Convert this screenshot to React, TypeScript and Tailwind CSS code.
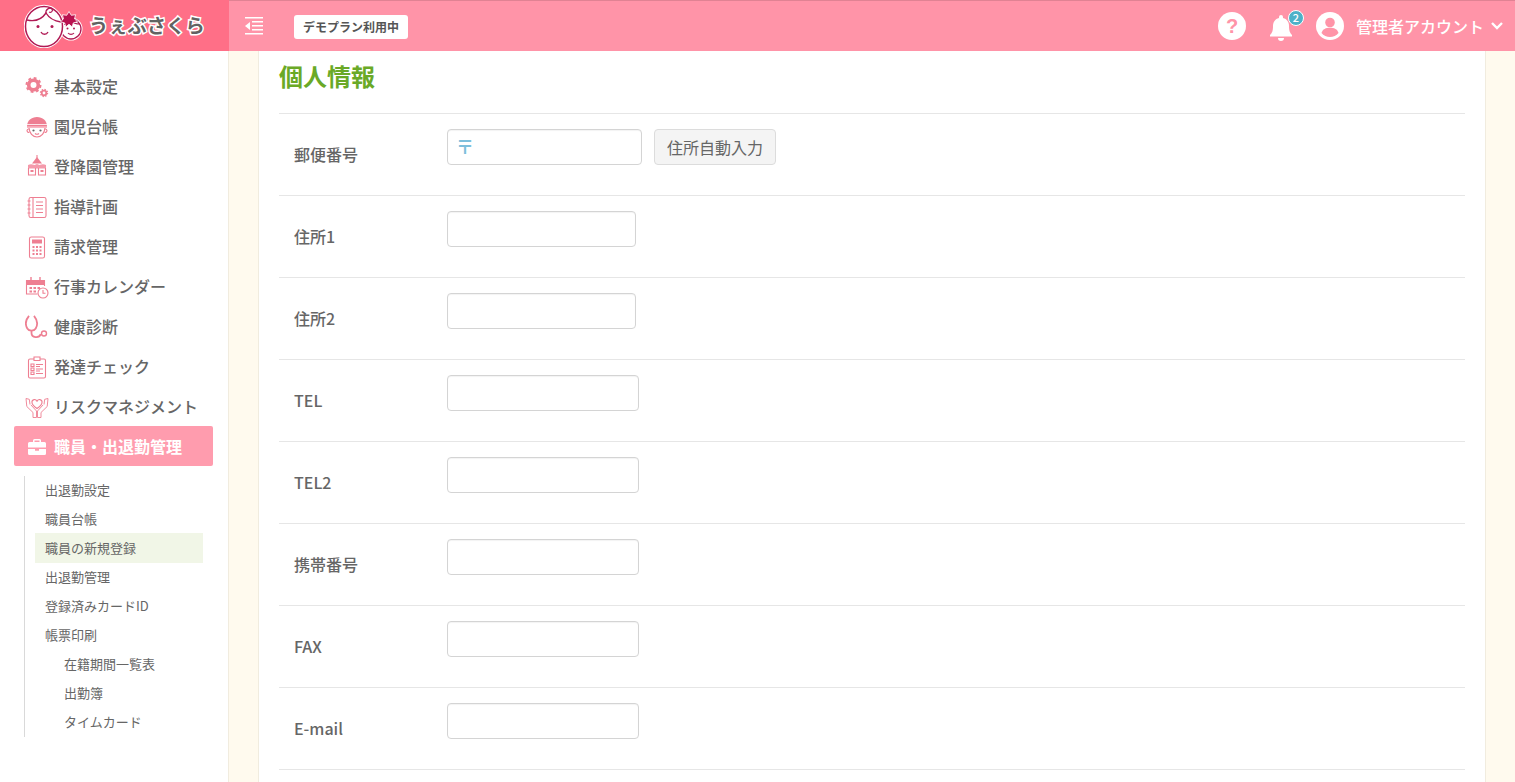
import type { ReactNode } from "react";

const font = "font-['Noto_Sans_CJK_JP','Noto_Sans',sans-serif]";
const pink = "#ee7f92";

// sidebar icons are hand drawn, 24x24 box
const Svg = ({ children }: { children: ReactNode }) => (
  <svg width="24" height="24" viewBox="0 0 24 24" fill="none" stroke={pink} strokeWidth="1.1">
    {children}
  </svg>
);

const GearIcon = () => (
  <Svg>
    <circle cx="8.500" cy="10" r="4.800" strokeWidth="3.600" />
    <circle cx="8.500" cy="10" r="7" strokeWidth="2" strokeDasharray="2.800 2.700" />
    <circle cx="19" cy="18" r="2.300" strokeWidth="1.800" />
    <circle cx="19" cy="18" r="3.600" strokeWidth="1.200" strokeDasharray="1.400 1.430" />
  </Svg>
);

const ChildIcon = () => (
  <Svg>
    <path d="M2 11.500C2 5.500 6.500 2 12 2s10 3.500 10 9.500Z" fill={pink} stroke="none" />
    <path d="M2 9.500h20" stroke="#fff" strokeWidth=".8" />
    <path d="M2 11h20v1.800H2Z" fill="#f7a7b5" stroke="none" />
    <path d="M4 13c.5 5 3.500 9 8 9s7.500-4 8-9" strokeWidth="1.200" />
    <path d="M3.800 14a2 2 0 0 0-1.800 1.500 2 2 0 0 0 2.300 2M20.200 14a2 2 0 0 1 1.800 1.500 2 2 0 0 1-2.300 2" />
    <circle cx="8.500" cy="15.500" r="1.100" fill="#666" stroke="none" />
    <circle cx="15.500" cy="15.500" r="1.100" fill="#666" stroke="none" />
    <path d="M10 18.500c1 .8 3 .8 4 0" />
  </Svg>
);

const SchoolIcon = () => (
  <Svg>
    <path d="M12 0v3" />
    <path d="M12 2l5 6.500H7Z" fill={pink} stroke="none" />
    <path d="M3 10c2-1 4-1 6.500 0l2.500-1 2.500 1c2.500-1 4.500-1 6.500 0v3.500H3Z" fill="#f49aab" stroke="none" />
    <path d="M3.500 13v7h7v-7M13.500 13v7h7v-7" />
    <path d="M5.500 15h3v2h-3zM15.500 15h3v2h-3z" fill={pink} stroke="none" />
  </Svg>
);

const NoteIcon = () => (
  <Svg>
    <rect x="4" y="2.500" width="17" height="20" rx="1.800" />
    <path d="M8 2.500v20M11 7h7M11 10.500h7M11 14h7M11 17.500h7" />
    <path d="M2.500 6h3M2.500 10h3M2.500 14h3M2.500 18h3" />
  </Svg>
);

const CalcIcon = () => (
  <Svg>
    <rect x="4.500" y="2" width="15" height="21" rx="1.800" />
    <rect x="7" y="4.500" width="10" height="4" fill={pink} stroke="none" />
    <path
      d="M7.500 11h2v2h-2zM11 11h2v2h-2zM14.500 11h2v2h-2zM7.500 14.500h2v2h-2zM11 14.500h2v2h-2zM14.500 14.500h2v2h-2zM7.500 18h2v2h-2zM11 18h2v2h-2zM14.500 18h2v2h-2z"
      fill={pink}
      stroke="none"
    />
  </Svg>
);

const CalendarIcon = () => (
  <Svg>
    <path d="M1.500 5h18v5h-18z" fill={pink} stroke="none" />
    <path d="M1.500 5v14h11M19.500 5v6" />
    <path d="M6 2v4M15 2v4" strokeWidth="1.400" />
    <path d="M4.500 12h2.500v2h-2.500zM8.500 12H11v2H8.500zM12.500 12H15v2h-2.500zM4.500 15.500h2.500v2h-2.500zM8.500 15.500H11v2H8.500z" fill={pink} stroke="none" />
    <circle cx="18" cy="18" r="5" />
    <path d="M18 15v3.200h2.500" />
  </Svg>
);

const StethIcon = () => (
  <Svg>
    <path d="M4 .8C.5 5 .3 10 2.300 13.500c1.700 2.800 6.700 2.800 8.400 0C12.700 10 12.500 5 9 .8" strokeWidth="1.800" />
    <path d="M6.500 15.500v2.500c0 4.800 7.500 5.800 9.300 1.200" strokeWidth="1.800" />
    <circle cx="19" cy="18.500" r="2.500" strokeWidth="1.400" />
  </Svg>
);

const CheckIcon = () => (
  <Svg>
    <rect x="3.500" y="4" width="17" height="19" rx="1.500" />
    <path d="M9 2h6v3.500H9z" fill="#fff" />
    <path d="M6 9h3v2.500H6zM6 13h3v2.500H6zM6 17h3v2.500H6z" />
    <path d="M11 9.500h7M11 11.500h4M11 14h7M11 16h4M11 18.500h7" />
  </Svg>
);

const HandsIcon = () => (
  <Svg>
    <path d="M12 13.500C8.500 11 7 9.500 7 7.500a2.500 2.500 0 0 1 5-.8 2.500 2.500 0 0 1 5 .8c0 2-1.500 3.500-5 6Z" />
    <path d="M1 3.500l.8 8 6.200 6v5h3.500v-6.500l-5.500-6M23 3.500l-.8 8-6.200 6v5h-3.500v-6.500l5.500-6" strokeWidth=".9" />
    <path d="M1 3.500l3.300.8L5 9.500M23 3.500l-3.300.8L19 9.500" strokeWidth=".9" />
  </Svg>
);

const CaseIcon = () => (
  <svg width="24" height="24" viewBox="0 0 24 24" fill="#fff">
    <path d="M9.500 4h5A1.500 1.500 0 0 1 16 5.500V7h3.500A1.500 1.500 0 0 1 21 8.500v4H3v-4A1.500 1.500 0 0 1 4.500 7H8V5.500A1.500 1.500 0 0 1 9.500 4Zm0 1.500V7h5V5.500Z" fillRule="evenodd" />
    <path d="M3 14h7v1.800h4V14h7v4.500a1.500 1.500 0 0 1-1.500 1.500h-15A1.500 1.500 0 0 1 3 18.500Z" />
  </svg>
);

// logo: mother and child faces with a cherry blossom
const Logo = () => (
  <svg width="60" height="44" viewBox="0 0 60 44">
    <circle cx="47" cy="25" r="10" fill="#fff" stroke="#fff" strokeWidth="3" />
    <circle cx="47" cy="25" r="10" fill="#fff" stroke="#b01a55" strokeWidth="1.300" />
    <path d="M38 20c4 1 7 0 9-3 2 2 5 3 9 3" fill="none" stroke="#b01a55" strokeWidth="1.100" />
    <circle cx="43.500" cy="24.500" r="1" fill="#b01a55" />
    <circle cx="50" cy="24.500" r="1" fill="#b01a55" />
    <path d="M44 29c1.500 1.800 4.500 1.800 6 0" fill="none" stroke="#b01a55" strokeWidth="1.100" />
    <ellipse cx="20" cy="22.500" rx="18.500" ry="20" fill="#fff" stroke="#fff" strokeWidth="3.500" />
    <ellipse cx="20" cy="22.500" rx="18.500" ry="20" fill="#fff" stroke="#b01a55" strokeWidth="1.500" />
    <path d="M3 16c9 2 15-1 19-7 3 5 8 8 15 9" fill="none" stroke="#b01a55" strokeWidth="1.400" />
    <path d="M22 10c-1-5 4-7 6-5 1.500 2-1 4-3 3" fill="none" stroke="#b01a55" strokeWidth="1.200" />
    <circle cx="14" cy="22.500" r="1.500" fill="#b01a55" />
    <circle cx="28" cy="22.500" r="1.500" fill="#b01a55" />
    <path d="M17 28c1.500 3 5.500 3 7 0" fill="none" stroke="#b01a55" strokeWidth="1.400" />
    <path
      d="M45 7.500l2.300 3.800 4.300-.6-1.100 4.200 3 2.900-4.200 1.100-1.100 4.100-3.200-2.800-3.200 2.800-1.100-4.100-4.200-1.100 3-2.900-1.100-4.200 4.300.6Z"
      fill="#b8114f"
      stroke="#fff"
      strokeWidth=".8"
    />
  </svg>
);

const menu = [
  { label: "基本設定", icon: <GearIcon /> },
  { label: "園児台帳", icon: <ChildIcon /> },
  { label: "登降園管理", icon: <SchoolIcon /> },
  { label: "指導計画", icon: <NoteIcon /> },
  { label: "請求管理", icon: <CalcIcon /> },
  { label: "行事カレンダー", icon: <CalendarIcon /> },
  { label: "健康診断", icon: <StethIcon /> },
  { label: "発達チェック", icon: <CheckIcon /> },
  { label: "リスクマネジメント", icon: <HandsIcon /> },
];

const subMenu = [
  { label: "出退勤設定" },
  { label: "職員台帳" },
  { label: "職員の新規登録", active: true },
  { label: "出退勤管理" },
  { label: "登録済みカードID" },
  { label: "帳票印刷" },
  { label: "在籍期間一覧表", child: true },
  { label: "出勤簿", child: true },
  { label: "タイムカード", child: true },
];

const rows = [
  { label: "住所1", width: "w-[189px]" },
  { label: "住所2", width: "w-[189px]" },
  { label: "TEL", width: "w-[192px]" },
  { label: "TEL2", width: "w-[192px]" },
  { label: "携帯番号", width: "w-[192px]" },
  { label: "FAX", width: "w-[192px]" },
  { label: "E-mail", width: "w-[192px]" },
];

const inputClass = "block h-9 rounded-[4px] border border-[#d4d4d4] bg-white shadow-[inset_0_1px_1px_rgba(0,0,0,0.05)]";

export default function App() {
  return (
    <div className={`${font} flex h-screen flex-col overflow-hidden bg-[#fffaee]`}>
      {/* header */}
      <header className="flex h-[51px] shrink-0 items-center bg-[#ff94a8] shadow-[inset_0_1px_0_rgba(0,0,0,0.12)]">
        <div className="flex h-full w-[229px] shrink-0 items-center gap-[6px] bg-[#ff6f87] pl-[24px]">
          <Logo />
          <span className="-ml-[1px] text-[19.300px] font-bold leading-none tracking-[0px] text-[#626262] [-webkit-text-stroke:3px_#fff] [paint-order:stroke]">
            うぇぶさくら
          </span>
        </div>
        <svg className="ml-[16px]" width="18" height="18" viewBox="0 0 18 18" fill="#fff">
          <path d="M0 0h18v1.500H0zM7 4h11v1.500H7zM7 8h11v1.500H7zM7 12h11v1.500H7zM0 16h18v1.500H0zM5 5v8L0 9Z" />
        </svg>
        <span className="ml-[31px] mt-[3px] flex h-[24px] w-[114px] items-center justify-center rounded-[3px] bg-white text-[12px] font-bold leading-none text-[#555]">
          デモプラン利用中
        </span>
        <div className="ml-auto flex items-center pr-[11px] text-white">
          <svg width="28" height="28" viewBox="0 0 28 28">
            <circle cx="14" cy="14" r="14" fill="#fff" />
            <text x="14" y="21" textAnchor="middle" fontSize="20" fontWeight="700" fill="#ff94a8" fontFamily="Liberation Sans, sans-serif">
              ?
            </text>
          </svg>
          <div className="relative ml-[23px] h-[28px] w-[26px]">
            <svg className="absolute left-0 top-[3px]" width="24" height="26" viewBox="0 0 24 26" fill="#fff">
              <path d="M12 0a2 2 0 0 1 2 2v1c4 1 6 4 6 8 0 5 1 7 3 9v1.500H1V20c2-2 3-4 3-9 0-4 2-7 6-8V2a2 2 0 0 1 2-2ZM9 23h6a3 3 0 0 1-6 0Z" />
            </svg>
            <span className="absolute left-[19px] top-[-2px] flex h-[16px] w-[16px] items-center justify-center rounded-full border border-white bg-[#4db1c8] text-[11px] font-medium leading-none text-white">
              2
            </span>
          </div>
          <svg className="ml-[21px]" width="28" height="28" viewBox="0 0 28 28">
            <circle cx="14" cy="14" r="14" fill="#fff" />
            <circle cx="14" cy="10.500" r="4.800" fill="#ff94a8" />
            <path d="M5.500 21c1-4 4.500-5.300 8.500-5.300s7.500 1.300 8.500 5.300a11 11 0 0 1-17 0Z" fill="#ff94a8" />
          </svg>
          <span className="ml-[12px] text-[16px] font-medium leading-none">管理者アカウント</span>
          <svg className="ml-[6px]" width="14" height="10" viewBox="0 0 14 10" fill="none" stroke="#fff" strokeWidth="2.400">
            <path d="M2 2l5 5 5-5" />
          </svg>
        </div>
      </header>

      <div className="flex min-h-0 flex-1">
        {/* sidebar */}
        <aside className="w-[229px] shrink-0 border-r border-[#f1ecdf] bg-white pl-[14px] pr-[15px] pt-[16px]">
          <ul>
            {menu.map((m) => (
              <li key={m.label} className="flex h-[40px] items-center gap-[5px] pl-[11px] text-[16px] font-medium text-[#666]">
                <span className="h-[24px] w-[24px] shrink-0">{m.icon}</span>
                <span className="-mt-[2px]">{m.label}</span>
              </li>
            ))}
            <li className="-mt-[1px] flex h-[40px] items-center gap-[5px] rounded-[2px] bg-[#ff9cae] pl-[11px] pt-[2px] text-[16px] font-bold text-white">
              <span className="h-[24px] w-[24px] shrink-0">
                <CaseIcon />
              </span>
              <span className="-mt-[2px]">職員・出退勤管理</span>
            </li>
          </ul>
          <ul className="ml-[10px] mt-[10px] h-[261px] border-l border-[#d9d9d9] pl-[10px] pr-[10px]">
            {subMenu.map((s) => (
              <li
                key={s.label}
                className={`flex items-center text-[13px] leading-none text-[#666] ${s.child ? "pl-[29px]" : "pl-[10px]"} ${s.active ? "-mt-[1px] h-[30px] pb-[2px] bg-[#f1f6e7]" : "h-[29px] pb-[3px]"}`}
              >
                {s.label}
              </li>
            ))}
          </ul>
        </aside>

        {/* main */}
        <main className="min-w-0 flex-1 pl-[29px] pr-[29px]">
          <div className="h-full border-x border-[#f1ecdf] bg-white pl-[20px] pr-[20px]">
            <h2 className="flex h-[62px] items-center pb-[12px] text-[24px] font-bold leading-none text-[#6aa926]">個人情報</h2>
            <div className="flex h-[82px] border-t border-[#e6e6e6] pt-[15px]">
              <div className="w-[168px] shrink-0 pl-[15px] pt-[14px] text-[16px] font-medium leading-[22px] text-[#666]">郵便番号</div>
              <div className={`${inputClass} w-[195px] pl-[8px] text-[18px] font-bold leading-[32px] text-[#7dbfdc]`}>〒</div>
              <button className="ml-[12px] h-9 w-[122px] rounded-[4px] border border-[#dcdcdc] bg-[#f4f4f4] text-[16px] leading-none text-[#666]">
                住所自動入力
              </button>
            </div>
            {rows.map((r) => (
              <div key={r.label} className="flex h-[82px] border-t border-[#e6e6e6] pt-[15px]">
                <div className="w-[168px] shrink-0 pl-[15px] pt-[14px] text-[16px] font-medium leading-[22px] text-[#666]">{r.label}</div>
                <div className={`${inputClass} ${r.width}`} />
              </div>
            ))}
            <div className="border-t border-[#e6e6e6]" />
          </div>
        </main>
      </div>
    </div>
  );
}
